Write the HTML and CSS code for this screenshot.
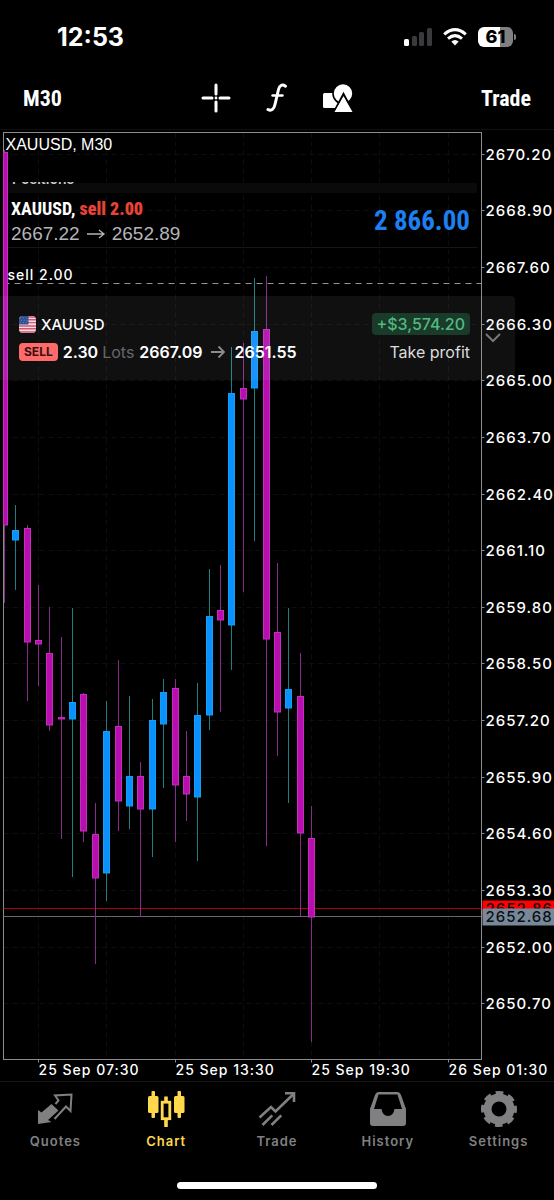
FILE: index.html
```html
<!DOCTYPE html>
<html lang="en">
<head>
  <meta charset="UTF-8">
  <meta name="viewport" content="width=device-width, initial-scale=1">
  <title>XAUUSD, M30</title>
  <link rel="stylesheet" href="styles.css">
</head>
<body>

  <div class="status">
    <span class="clock">12:53</span>
    <div class="status-icons">
      <svg width="28" height="18" viewBox="0 0 28 18">
        <rect x="0" y="11" width="5" height="7" rx="1.5" fill="#fff"/>
        <rect x="8" y="8" width="5" height="10" rx="1.5" fill="#3a3a3c"/>
        <rect x="15" y="4" width="5" height="14" rx="1.5" fill="#3a3a3c"/>
        <rect x="23" y="0" width="5" height="18" rx="1.5" fill="#3a3a3c"/>
      </svg>
      <svg width="24" height="18" viewBox="0 0 24 18" fill="none" stroke="#fff" stroke-width="3">
        <path d="M1.2 6.3Q12-3 22.8 6.3"/>
        <path d="M5 10.6Q12 4.6 19 10.6"/>
        <path d="M8.3 13.6Q12 10.6 15.7 13.6L12 17.4Z" fill="#fff" stroke="none"/>
      </svg>
      <div class="battery"><span>61</span></div>
    </div>
  </div>

  <header class="toolbar">
    <button class="text-btn">M30</button>
    <div class="tools">
      <button aria-label="Crosshair">
        <svg width="30" height="30" viewBox="0 0 30 30" stroke="#fff" stroke-width="3" stroke-linecap="round">
          <path d="M15 2v9M15 19v9M2 15h9M19 15h9"/>
          <circle cx="15" cy="15" r="1.4" fill="#fff" stroke="none"/>
        </svg>
      </button>
      <button aria-label="Indicators">
        <svg width="22" height="30" viewBox="0 0 22 30" fill="none" stroke="#fff" stroke-linecap="round">
          <path stroke-width="3" d="M19.5 3.2C16 .8 13.5 2.6 12.5 6.500L9 21.500C8 26 5.500 28.500 2 26.500"/>
          <path stroke-width="2.4" d="M6.500 12.500h10"/>
        </svg>
      </button>
      <button aria-label="Objects">
        <svg width="30" height="30" viewBox="0 0 30 30" fill="#fff">
          <rect x="0" y="10" width="16" height="15" rx="1.5"/>
          <circle cx="20" cy="10.5" r="10" stroke="#000" stroke-width="1.6"/>
          <path d="M20.5 11L30.600 30H10.400Z" stroke="#000" stroke-width="2"/>
          <path d="M20.5 13.500L29.500 29H11.500Z"/>
        </svg>
      </button>
    </div>
    <button class="text-btn">Trade</button>
  </header>

  <main class="chart">
    <svg id="plot" role="img" aria-label="XAUUSD M30 candles"></svg>

    <div class="positions">
      <div class="positions-title"><span>Positions</span></div>
      <div class="position">
        <div>
          <div class="symbol">XAUUSD, <b>sell 2.00</b></div>
          <div class="prices">2667.22
            <svg width="20" height="12" viewBox="0 0 20 12" fill="none" stroke="#b4b4b8" stroke-width="1.3"><path d="M1 6h17M13 2l5 4-5 4"/></svg>
            2652.89</div>
        </div>
        <div class="profit">2 866.00</div>
      </div>
    </div>

    <div class="deal">
      <div class="deal-info">
        <div class="deal-row">
          <svg class="flag" viewBox="0 0 18 18">
            <rect width="18" height="18" fill="#f3dfe4"/>
            <path stroke="#d4566f" stroke-width="1.5" d="M0 1h18M0 4h18M0 7h18M0 10.5h18M0 13.5h18M0 17h18"/>
            <rect width="10" height="9" fill="#2c4f94"/>
            <path stroke="#7f9acb" stroke-dasharray="1 2" d="M1 2h8M2 4.5h7M1 7h8"/>
          </svg>
          <span class="deal-symbol">XAUUSD</span>
          <span class="gain">+$3,574.20</span>
        </div>
        <div class="deal-row">
          <span class="side">SELL</span>
          <span>2.30 <i>Lots</i></span>
          <span>2667.09</span>
          <svg class="arrow" width="14" height="14" viewBox="0 0 14 14" fill="none" stroke="#8b8b90" stroke-width="1.8"><path d="M0 7h13M7.5 1.5L13 7l-5.500 5.500"/></svg>
          <span>2651.55</span>
          <span class="reason">Take profit</span>
        </div>
      </div>
      <button class="expand" aria-label="Expand">
        <svg width="16" height="10" viewBox="0 0 16 10" fill="none" stroke="#77777c" stroke-width="2"><path d="M1 1l7 7 7-7"/></svg>
      </button>
    </div>
  </main>

  <nav class="tabs">
    <a href="#quotes">
      <svg width="38" height="38" viewBox="0 0 38 38">
        <path fill="#808082" d="M2 20l3.500 2.500L15.500 14l7 6.500L12 30l3.500 2L2 34Z"/>
        <path fill="none" stroke="#808082" stroke-width="2" d="M19.500 14l3-3.500-3.500-5L35.500 4.500l-1 16.500-4.500-4.500L18.500 29"/>
      </svg>
      <span>Quotes</span>
    </a>
    <a href="#chart" class="active">
      <svg width="38" height="38" viewBox="0 0 38 38" fill="#ffd84d">
        <rect x="1" y="6" width="10.5" height="17" rx="1.5"/><rect x="4.500" y="1" width="3.500" height="27" rx="1"/>
        <rect x="27" y="6" width="10.5" height="17" rx="1.5"/><rect x="30.500" y="1" width="3.500" height="27" rx="1"/>
        <path d="M17.200 6.500h3.600V12h-3.600zM17.200 28h3.600v9h-3.600z"/>
        <rect x="15.200" y="12.200" width="7.600" height="16.500" fill="none" stroke="#ffd84d" stroke-width="2.800"/>
      </svg>
      <span>Chart</span>
    </a>
    <a href="#trade">
      <svg width="38" height="38" viewBox="0 0 38 38" fill="none" stroke="#808082" stroke-width="2.6">
        <path d="M1.500 27.500L13 17l4.500 4.500L35.500 4"/>
        <path d="M27 3.300h9V12"/>
        <path d="M4.500 35L14.300 25.300M13.500 35l9.800-9.700"/>
      </svg>
      <span>Trade</span>
    </a>
    <a href="#history">
      <svg width="38" height="38" viewBox="0 0 38 38" fill="#808082">
        <path fill-rule="evenodd" d="M9.5 2h19q2.500 0 3.300 2.500L37 19v14q0 3-3 3H4q-3 0-3-3V19L6.200 4.500Q7 2 9.500 2ZM9.500 4.500L5 19h7.500q1 7 6.500 7t6.500-7H33L28.500 4.500Z"/>
      </svg>
      <span>History</span>
    </a>
    <a href="#settings">
      <svg width="38" height="38" viewBox="0 0 38 38" fill="none" stroke="#808082">
        <circle cx="19" cy="19" r="11.5" stroke-width="8"/>
        <circle cx="19" cy="19" r="16" stroke-width="4" stroke-dasharray="7.566 5" stroke-dashoffset="3.78"/>
      </svg>
      <span>Settings</span>
    </a>
  </nav>
  <div class="home"></div>

  <script src="chart.js"></script>
</body>
</html>
```
FILE: styles.css
```css
* {
  box-sizing: border-box;
}

body {
  margin: 0;
  min-height: 100vh;
  display: flex;
  flex-direction: column;
  background: #000;
  color: #fff;
  font-family: Inter, "Liberation Sans", sans-serif;
  font-size: 16px;
}

button {
  border: none;
  padding: 0;
  background: transparent;
  color: inherit;
  cursor: pointer;
}

svg {
  display: block;
}

/* status bar */
.status {
  display: flex;
  align-items: center;
  justify-content: space-between;
  height: 74px;
  padding: 0 41px 0 57px;
}

.clock {
  font-size: 25px;
  font-weight: 700;
}

.status-icons {
  display: flex;
  align-items: center;
  gap: 11px;
}

.battery {
  position: relative;
  width: 35px;
  height: 20px;
  border-radius: 6px;
  background: linear-gradient(90deg, #fff 62%, #808080 62%);
  color: #000;
  font-size: 18px;
  font-weight: 800;
  line-height: 20px;
  text-align: center;
}

.battery::after {
  content: "";
  position: absolute;
  left: 36px;
  top: 7px;
  width: 2px;
  height: 6px;
  border-radius: 0 2px 2px 0;
  background: #808080;
}

/* toolbar */
.toolbar {
  display: grid;
  grid-template-columns: 1fr auto 1fr;
  align-items: center;
  height: 48px;
  padding: 0 23px;
}

.text-btn {
  justify-self: start;
  font-family: "Roboto Condensed", Roboto, sans-serif;
  font-size: 22px;
  font-weight: 700;
}

.text-btn:last-child {
  justify-self: end;
}

.tools {
  display: flex;
  align-items: center;
  gap: 35px;
}

/* chart */
.chart {
  flex: 1;
  position: relative;
  margin-top: 7px;
  border-top: 1px solid #111;
  min-height: 600px;
}

#plot {
  position: absolute;
  width: 100%;
  height: 100%;
}

#plot text {
  fill: #fff;
  font-size: 15px;
  font-weight: 500;
  letter-spacing: 1px;
}

#plot .label {
  font-size: 14px;
}

#plot .title {
  font-family: "Liberation Sans", sans-serif;
  font-size: 16px;
  font-weight: 400;
  letter-spacing: 0;
}

#plot .tag {
  fill: #0b0f14;
}

.frame {
  fill: none;
  stroke: #8c8c8c;
}

.grid {
  stroke: #0d0f0d;
  stroke-dasharray: 5 4;
}

.up {
  fill: #0a90ff;
  stroke: #12a0f0;
}

.down {
  fill: #b70fae;
  stroke: #c62cc0;
}

.wick-up {
  stroke: #1f7f80;
}

.wick-down {
  stroke: #8a2a8a;
}

.order {
  stroke: #8d9a92;
  stroke-dasharray: 6 5;
}

.ask {
  stroke: #b00008;
}

.bid {
  stroke: #65696e;
}

/* open position */
.positions {
  position: absolute;
  top: 50px;
  left: 8px;
  right: 77px;
  border-bottom: 1px solid #151515;
}

.positions-title {
  height: 13px;
  padding: 2px 0 0 4px;
  background: linear-gradient(transparent 3px, #0a0a0a 3px);
}

/* scrolled under the top edge */
.positions-title span {
  display: flex;
  align-items: flex-end;
  height: 2px;
  overflow: hidden;
  color: #ccc;
  font-size: 14px;
  font-weight: 600;
  line-height: 10px;
}

.position {
  display: flex;
  align-items: center;
  justify-content: space-between;
  padding: 3px 7px 1px 3px;
}

.symbol,
.profit {
  font-family: "Roboto Condensed", Roboto, sans-serif;
  font-weight: 700;
}

.symbol {
  font-size: 18px;
  line-height: 25px;
}

.symbol b {
  color: #ea4335;
}

.prices {
  display: flex;
  align-items: center;
  gap: 6px;
  color: #b4b4b8;
  font-family: "Liberation Sans", sans-serif;
  font-size: 19px;
  line-height: 25px;
}

.profit {
  color: #1e7ff0;
  font-size: 27px;
}

/* closed deal */
.deal {
  position: absolute;
  top: 166px;
  left: 0;
  right: 39px;
  display: flex;
  align-items: center;
  padding: 14px 14px;
  border-radius: 0 4px 4px 0;
  padding-left: 19px;
  background: rgba(200, 200, 215, 0.08);
}

.deal-info {
  flex: 1;
}

.deal-row {
  display: flex;
  align-items: center;
  gap: 5px;
  height: 28px;
  font-weight: 600;
}

.flag {
  width: 17px;
  height: 17px;
  border-radius: 4px;
}

.deal-symbol {
  font-size: 15px;
  font-weight: 500;
}

.gain {
  margin-left: auto;
  padding: 0 5px;
  border-radius: 4px;
  background: #1a3a2a;
  color: #52b982;
  font-weight: 500;
  line-height: 22px;
}

.side {
  padding: 0 5px;
  border-radius: 4px;
  background: #ff6b6b;
  color: #3a1010;
  font-size: 12px;
  font-weight: 700;
  line-height: 18px;
}

.deal-row i {
  color: #66666b;
  font-style: normal;
  font-weight: 400;
}

.arrow {
  margin: 0 4px;
}

.reason {
  margin-left: auto;
  color: #ddd;
  font-weight: 400;
}

.expand {
  margin-left: 15px;
}

/* tab bar */
.tabs {
  display: grid;
  grid-template-columns: repeat(5, 1fr);
  padding-top: 8px;
  border-top: 1px solid #151515;
}

.tabs a {
  display: flex;
  flex-direction: column;
  align-items: center;
  gap: 4px;
  color: #808082;
  font-size: 13px;
  font-weight: 600;
  letter-spacing: 1px;
  line-height: 18px;
  text-decoration: none;
}

.tabs .active {
  color: #ffd84d;
}

.home {
  width: 36%;
  height: 7px;
  margin: 32px auto 11px;
  border-radius: 4px;
  background: #fff;
}
```
FILE: chart.js
```js
// open, high, low, close
const candles = [
  [2670.23, 2670.29, 2659.89, 2661.68],
  [2661.34, 2662.14, 2660.19, 2661.57],
  [2661.61, 2661.68, 2657.64, 2658.99],
  [2659.04, 2660.30, 2657.98, 2658.95],
  [2658.74, 2659.80, 2656.95, 2657.09],
  [2657.27, 2659.11, 2654.47, 2657.23],
  [2657.23, 2659.78, 2653.60, 2657.62],
  [2657.80, 2657.82, 2654.40, 2654.65],
  [2654.58, 2655.30, 2651.60, 2653.58],
  [2653.69, 2657.64, 2653.05, 2656.94],
  [2657.07, 2658.58, 2654.65, 2655.34],
  [2655.23, 2657.75, 2654.70, 2655.92],
  [2655.92, 2656.24, 2652.68, 2655.16],
  [2655.16, 2657.69, 2654.06, 2657.20],
  [2657.11, 2658.14, 2655.64, 2657.85],
  [2657.94, 2658.14, 2654.40, 2655.71],
  [2655.92, 2656.95, 2654.88, 2655.50],
  [2655.43, 2658.05, 2653.96, 2657.32],
  [2657.32, 2660.67, 2656.97, 2659.59],
  [2659.73, 2660.76, 2657.39, 2659.50],
  [2659.38, 2665.77, 2658.35, 2664.71],
  [2664.83, 2665.86, 2660.14, 2664.58],
  [2664.83, 2667.35, 2661.31, 2666.14],
  [2666.18, 2667.40, 2654.31, 2659.06],
  [2659.22, 2660.81, 2656.38, 2657.39],
  [2657.48, 2659.78, 2655.30, 2657.91],
  [2657.75, 2658.74, 2652.70, 2654.61],
  [2654.49, 2655.23, 2649.81, 2652.68]
];

const times = ['25 Sep 07:30', '25 Sep 13:30', '25 Sep 19:30', '26 Sep 01:30'];
const topPrice = 2670.70;
const bottomPrice = 2649.42;
const plot = document.getElementById('plot');

function draw() {
  const left = 3.5;
  const top = 2.5;
  const right = plot.clientWidth - 72.5;
  const bottom = plot.clientHeight - 21.5;
  const step = (right - left) / 42;
  const px = i => Math.round(left + i * step + 0.3) + 0.5;
  const py = p => Math.floor(top + (topPrice - p) / (topPrice - bottomPrice) * (bottom - top));
  const line = (cls, x1, y1, x2, y2) => `<line class="${cls}" x1="${x1}" y1="${y1}" x2="${x2}" y2="${y2}"/>`;
  let out = '';

  // grid
  for (let i = 3; i < 42; i += 6) {
    out += line('grid', px(i), top, px(i), bottom);
  }
  for (let n = 0; n < 16; n++) {
    const price = 2670.20 - n * 1.3;
    const y = py(price) + 0.5;
    out += line('grid', left, y, right, y);
    out += line('frame', right, y, right + 3, y);
    out += `<text x="${right + 4}" y="${y + 5}">${price.toFixed(2)}</text>`;
  }
  times.forEach((time, n) => {
    const x = px(3 + n * 12);
    out += line('frame', x, bottom, x, bottom + 3);
    out += `<text class="label" x="${x}" y="${bottom + 15}">${time}</text>`;
  });

  out += `<rect class="frame" x="${left}" y="${top}" width="${right - left}" height="${bottom - top}"/>`;

  // current prices
  const ask = py(2652.86) - 0.5;
  const bid = py(2652.68) - 0.5;
  out += line('ask', left, ask, right, ask) + line('bid', left, bid, right, bid);
  out += `<rect x="${right + 1}" y="${ask - 8}" width="72" height="17" fill="#f00"/>`;
  out += `<text class="tag" x="${right + 4}" y="${ask + 5}">2652.86</text>`;
  out += `<rect x="${right + 1}" y="${bid - 8}" width="72" height="17" fill="#778899"/>`;
  out += `<text class="tag" x="${right + 4}" y="${bid + 5}">2652.68</text>`;

  // order
  const order = py(2667.22) - 0.5;
  out += line('order', left, order, right, order);

  candles.forEach(([o, h, l, c], i) => {
    const dir = c > o ? 'up' : 'down';
    const x = px(i);
    const y = py(Math.max(o, c)) + 0.5;
    const height = Math.max(py(Math.min(o, c)) - y, 1);
    // first candle is cut by the frame
    const x1 = Math.max(x - 3, left);
    out += line('wick-' + dir, x, py(h), x, py(l));
    out += `<rect class="${dir}" x="${x1}" y="${y}" width="${x + 3 - x1}" height="${height}"/>`;
  });

  out += `<text class="label" x="${left + 4}" y="${order - 4}">sell 2.00</text>`;
  out += `<text class="title" x="${left + 2}" y="${top + 17}">XAUUSD, M30</text>`;
  plot.innerHTML = out;
}

draw();
window.addEventListener('resize', draw);
```
